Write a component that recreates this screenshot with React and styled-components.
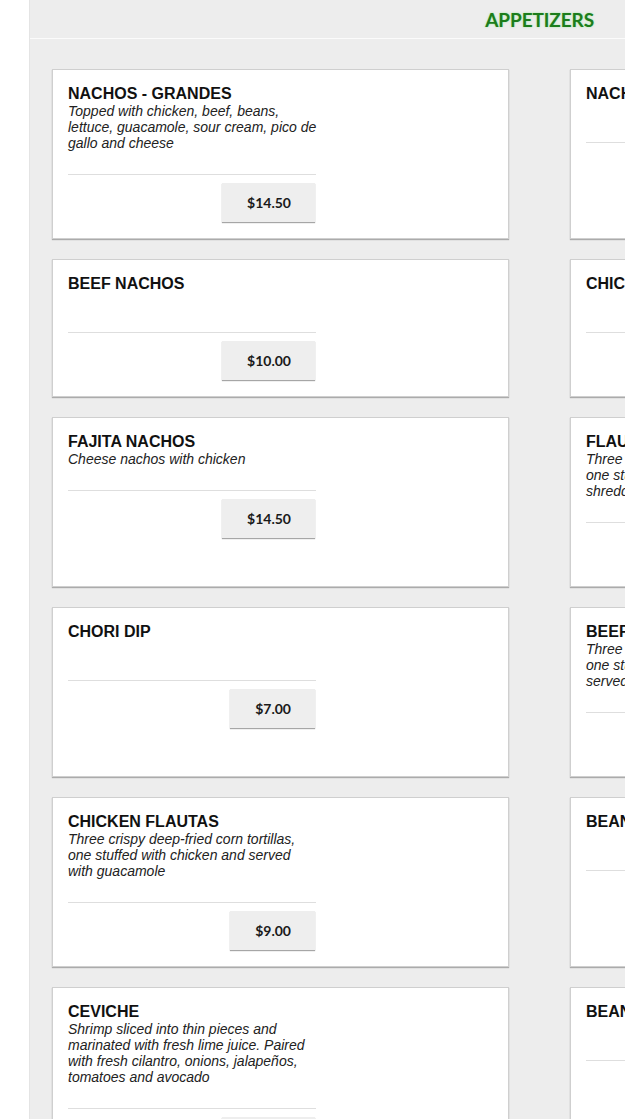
import React from "react";
import styled, { createGlobalStyle } from "styled-components";

const Global = createGlobalStyle`
  html, body { margin: 0; padding: 0; background: #ffffff; overflow-x: hidden; }
  body { font-family: "Liberation Sans", Arial, sans-serif; }
  * { box-sizing: border-box; }
`;

const Main = styled.div`
  margin-left: 29px;
  background: #ededed;
  min-height: 1119px;
  border-left: 1px solid #e4e4e4;
`;

const Header = styled.header`
  height: 39px;
  border-bottom: 1px solid #fbfbfb;
  display: flex;
  align-items: center;
  justify-content: flex-end;
  padding-right: 31px;
  padding-top: 1px;
`;

const CategoryTitle = styled.h1`
  margin: 0;
  font-family: Lato, "Liberation Sans", sans-serif;
  font-size: 19px;
  font-weight: 700;
  color: #1c7d1c;
  text-shadow: 0 0 2px rgba(120, 230, 120, 0.7);
  letter-spacing: -0.1px;
`;

const Grid = styled.div`
  display: grid;
  grid-template-columns: 457px 457px;
  column-gap: 61px;
  row-gap: 20px;
  padding: 30px 0 40px 22px;
`;

const Card = styled.article`
  background: #ffffff;
  border: 1px solid #cfcfcf;
  box-shadow: 0 1px 1px rgba(0, 0, 0, 0.28);
  padding: 15px 16px 16px 15px;
  display: flex;
  flex-direction: column;
`;

const Body = styled.div`
  width: 250px;
`;

const Title = styled.h2`
  margin: 0;
  font-size: 16px;
  line-height: 18px;
  font-weight: 700;
  color: #111;
  white-space: nowrap;
`;

const Desc = styled.p`
  margin: 0;
  min-height: 16px;
  font-size: 14px;
  line-height: 16px;
  font-style: italic;
  color: #222;
`;

const Divider = styled.hr`
  margin: 23px 0 0;
  border: 0;
  border-top: 1px solid #dedede;
  width: 248px;
`;

const Footer = styled.div`
  width: 248px;
  display: flex;
  justify-content: flex-end;
  padding-top: 8px;
`;

const Price = styled.button`
  height: 39px;
  padding: 0 24px 0 25px;
  margin-right: 1px;
  border: 0;
  background: #eeeeee;
  box-shadow: 0 1px 1px rgba(0, 0, 0, 0.35);
  font-family: Lato, "Liberation Sans", sans-serif;
  font-weight: 700;
  font-size: 14px;
  color: #1a1a1a;
`;

const items = [
  { name: "NACHOS - GRANDES", desc: "Topped with chicken, beef, beans, lettuce, guacamole, sour cream, pico de gallo and cheese", price: "$14.50" },
  { name: "NACHOS - CHICOS", desc: "", price: "$10.50" },
  { name: "BEEF NACHOS", desc: "", price: "$10.00" },
  { name: "CHICKEN NACHOS", desc: "", price: "$10.00" },
  { name: "FAJITA NACHOS", desc: "Cheese nachos with chicken", price: "$14.50" },
  { name: "FLAUTAS", desc: "Three crispy deep-fried corn tortillas, one stuffed with beef, one with shredded chicken", price: "$9.00" },
  { name: "CHORI DIP", desc: "", price: "$7.00" },
  { name: "BEEF FLAUTAS", desc: "Three crispy deep-fried corn tortillas, one stuffed with shredded beef and served with guacamole", price: "$9.00" },
  { name: "CHICKEN FLAUTAS", desc: "Three crispy deep-fried corn tortillas, one stuffed with chicken and served with guacamole", price: "$9.00" },
  { name: "BEAN DIP", desc: "", price: "$6.00" },
  { name: "CEVICHE", desc: "Shrimp sliced into thin pieces and marinated with fresh lime juice. Paired with fresh cilantro, onions, jalapeños, tomatoes and avocado", price: "$14.00" },
  { name: "BEAN & CHEESE DIP", desc: "", price: "$7.00" },
];

export default function App() {
  return (
    <>
      <Global />
      <Main>
        <Header>
          <CategoryTitle>APPETIZERS</CategoryTitle>
        </Header>
        <Grid>
          {items.map((it) => (
            <Card key={it.name}>
              <Body>
                <Title>{it.name}</Title>
                <Desc>{it.desc}</Desc>
              </Body>
              <Divider />
              <Footer>
                <Price>{it.price}</Price>
              </Footer>
            </Card>
          ))}
        </Grid>
      </Main>
    </>
  );
}
